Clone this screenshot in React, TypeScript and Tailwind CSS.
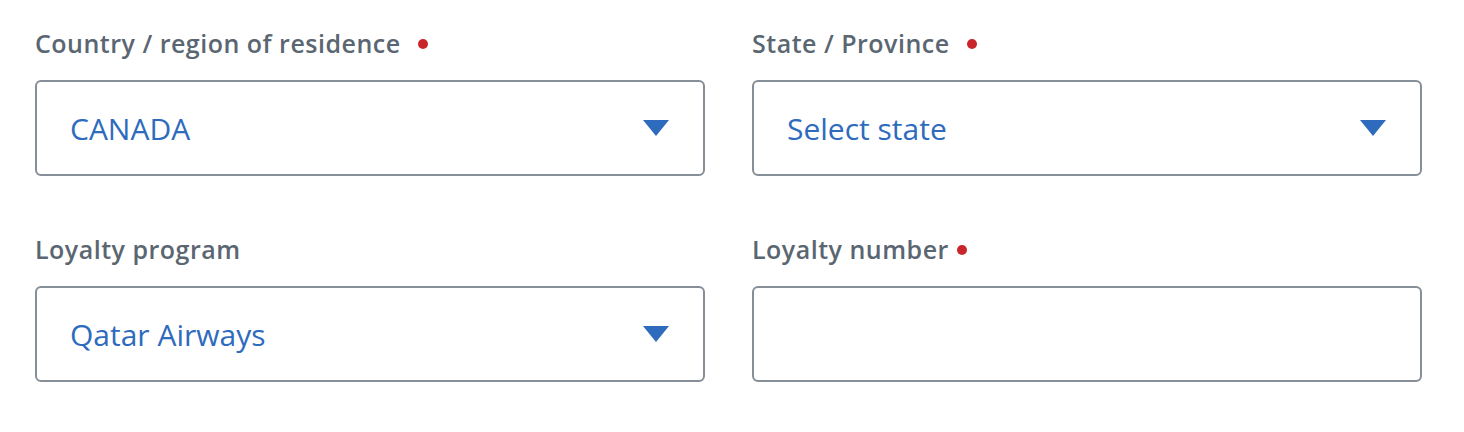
import React from 'react';

const Dot = ({ className }: { className: string }) => (
  <span className={`inline-block w-[10px] h-[10px] rounded-full bg-[#c8262a] ${className}`} />
);

const Caret = () => (
  <svg width="26" height="16" viewBox="0 0 26 16" className="shrink-0">
    <path d="M0 0 H26 L13 16 Z" fill="#2e6bbd" />
  </svg>
);

const Field = ({ label, value, required, dotGap, select }: any) => (
  <div className="flex flex-col">
    <div className="flex items-center h-8 text-[25px] tracking-[0.5px] font-semibold text-[#5a6671]">
      <span>{label}</span>
      {required && <Dot className={dotGap} />}
    </div>
    <div className="mt-5 h-[96px] border-2 border-[#868e97] rounded-md flex items-center justify-between pl-[33px] pr-[34px]">
      <span className="text-[30px] text-[#2e6bbd]">{value}</span>
      {select && <Caret />}
    </div>
  </div>
);

export default function App() {
  return (
    <div className="w-[1464px] h-[432px] bg-white font-['Open_Sans',sans-serif] pl-[35px] pt-[28px]">
      <div className="grid grid-cols-[670px_670px] gap-x-[47px] gap-y-[58px]">
        <Field label="Country / region of residence" value="CANADA" required dotGap="ml-[17px]" select />
        <Field label="State / Province" value="Select state" required dotGap="ml-[17px]" select />
        <Field label="Loyalty program" value="Qatar Airways" select />
        <Field label="Loyalty number" value="" required dotGap="ml-[8px]" />
      </div>
    </div>
  );
}
